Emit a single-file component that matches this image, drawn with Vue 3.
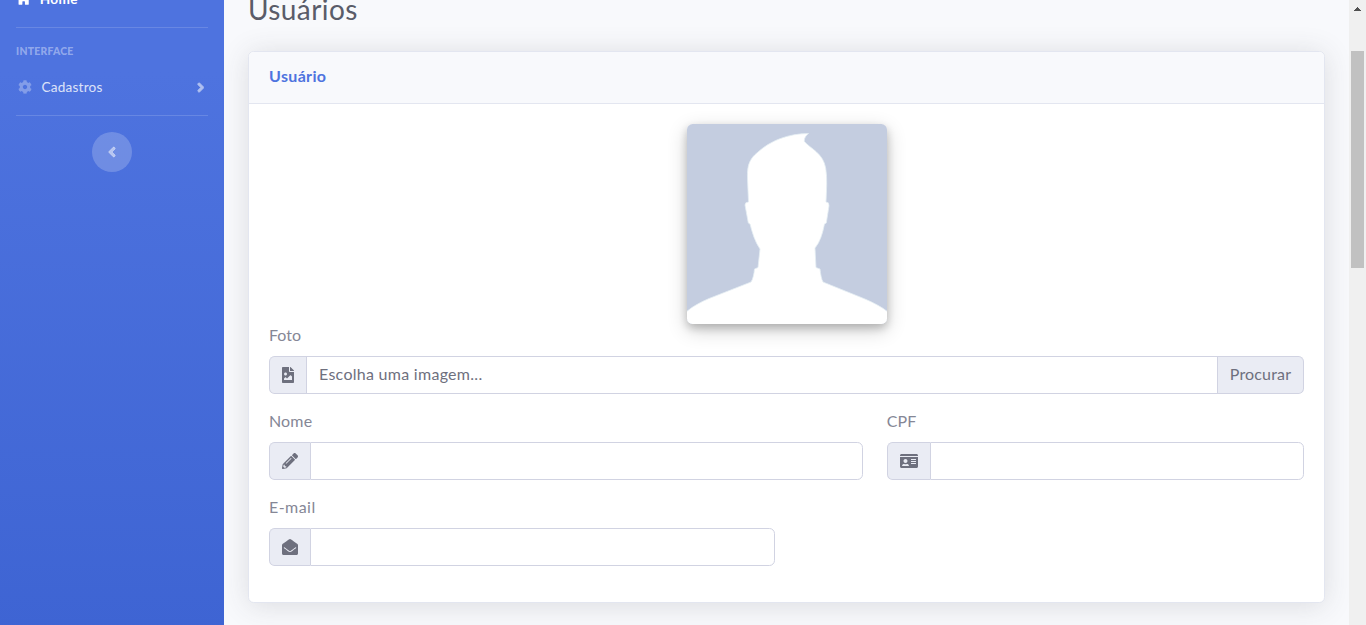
<script setup>
const icons = {
  home: { w: 576, d: 'M280.37 148.26L96 300.11V464a16 16 0 0 0 16 16l112.06-.29a16 16 0 0 0 15.92-16V368a16 16 0 0 1 16-16h64a16 16 0 0 1 16 16v95.64a16 16 0 0 0 16 16.05L464 480a16 16 0 0 0 16-16V300L295.67 148.26a12.19 12.19 0 0 0-15.3 0z' },
  cog: { w: 512, d: 'M487.4 315.7l-42.6-24.6c4.3-23.2 4.3-47 0-70.2l42.6-24.6c4.9-2.8 7.1-8.6 5.5-14-11.1-35.6-30-67.8-54.7-94.6-3.8-4.1-10-5.1-14.8-2.3L380.8 110c-17.9-15.4-38.5-27.3-60.8-35.1V25.8c0-5.6-3.9-10.5-9.4-11.7-36.7-8.2-74.3-7.8-109.2 0-5.5 1.2-9.4 6.1-9.4 11.7V75c-22.2 7.9-42.8 19.8-60.8 35.1L88.7 85.5c-4.9-2.8-11-1.9-14.8 2.3-24.7 26.7-43.6 58.9-54.7 94.6-1.7 5.4.6 11.2 5.5 14L67.3 221c-4.3 23.2-4.3 47 0 70.2l-42.6 24.6c-4.9 2.8-7.1 8.6-5.5 14 11.1 35.6 30 67.8 54.7 94.6 3.8 4.1 10 5.1 14.8 2.3l42.6-24.6c17.9 15.4 38.5 27.3 60.8 35.1v49.2c0 5.6 3.9 10.5 9.4 11.7 36.7 8.2 74.3 7.8 109.2 0 5.5-1.2 9.4-6.1 9.4-11.7v-49.2c22.2-7.9 42.8-19.8 60.8-35.1l42.6 24.6c4.9 2.8 11 1.9 14.8-2.3 24.7-26.7 43.6-58.9 54.7-94.6 1.5-5.5-.7-11.3-5.6-14.1zM256 336c-44.1 0-80-35.9-80-80s35.9-80 80-80 80 35.9 80 80-35.9 80-80 80z' },
  right: { w: 256, d: 'M224.3 273l-136 136c-9.4 9.4-24.6 9.4-33.9 0l-22.6-22.6c-9.4-9.4-9.4-24.6 0-33.9l96.4-96.4-96.4-96.4c-9.4-9.4-9.4-24.6 0-33.9L54.3 103c9.4-9.4 24.6-9.4 33.9 0l136 136c9.5 9.4 9.5 24.6.1 34z' },
  left: { w: 256, d: 'M31.7 239l136-136c9.4-9.4 24.6-9.4 33.9 0l22.6 22.6c9.4 9.4 9.4 24.6 0 33.9L127.9 256l96.4 96.4c9.4 9.4 9.4 24.6 0 33.9L201.7 409c-9.4 9.4-24.6 9.4-33.9 0l-136-136c-9.5-9.4-9.5-24.6-.1-34z' },
  image: { w: 384, d: 'M384 121.941V128H256V0h6.059a24 24 0 0 1 16.97 7.029l97.941 97.941a24.002 24.002 0 0 1 7.03 16.971zM248 160c-13.2 0-24-10.8-24-24V0H24C10.745 0 0 10.745 0 24v464c0 13.255 10.745 24 24 24h336c13.255 0 24-10.745 24-24V160H248zm-135.455 16c26.51 0 48 21.49 48 48s-21.49 48-48 48-48-21.49-48-48 21.491-48 48-48zm208 240h-256l.485-48.485L104.545 328c4.686-4.686 11.799-4.201 16.485.485L160.545 368 264.06 264.485c4.686-4.686 12.284-4.686 16.971 0L320.545 304v112z' },
  pencil: { w: 512, d: 'M497.9 142.1l-46.1 46.1c-4.7 4.7-12.3 4.7-17 0l-111-111c-4.7-4.7-4.7-12.3 0-17l46.1-46.1c18.7-18.7 49.1-18.7 67.9 0l60.1 60.1c18.8 18.7 18.8 49.1 0 67.9zM284.2 99.8L21.6 362.4.4 483.9c-2.9 16.4 11.4 30.6 27.8 27.8l121.5-21.3 262.6-262.6c4.7-4.7 4.7-12.3 0-17l-111-111c-4.8-4.7-12.4-4.7-17.1 0zM124.1 339.9c-5.5-5.5-5.5-14.3 0-19.8l154-154c5.5-5.5 14.3-5.5 19.8 0s5.5 14.3 0 19.8l-154 154c-5.5 5.5-14.3 5.5-19.8 0zM88 424h48v36.3l-64.5 11.3-31.1-31.1L51.7 376H88v48z' },
  idcard: { w: 576, d: 'M528 32H48C21.5 32 0 53.5 0 80v16h576V80c0-26.5-21.5-48-48-48zM0 432c0 26.5 21.5 48 48 48h480c26.5 0 48-21.5 48-48V128H0v304zM352 200c0-4.4 3.6-8 8-8h144c4.4 0 8 3.6 8 8v16c0 4.4-3.6 8-8 8H360c-4.4 0-8-3.6-8-8v-16zm0 64c0-4.4 3.6-8 8-8h144c4.4 0 8 3.6 8 8v16c0 4.4-3.6 8-8 8H360c-4.4 0-8-3.6-8-8v-16zm0 64c0-4.4 3.6-8 8-8h144c4.4 0 8 3.6 8 8v16c0 4.4-3.6 8-8 8H360c-4.4 0-8-3.6-8-8v-16zM176 192c35.3 0 64 28.7 64 64s-28.7 64-64 64-64-28.7-64-64 28.7-64 64-64zM67.1 396.2C75.5 370.5 99.6 352 128 352h8.2c12.3 5.1 25.7 8 39.8 8s27.6-2.9 39.8-8h8.2c28.4 0 52.5 18.5 60.9 44.2 3.2 9.9-5.2 19.8-15.6 19.8H82.7c-10.4 0-18.8-10-15.6-19.8z' },
  mail: { w: 512, d: 'M512 464c0 26.51-21.49 48-48 48H48c-26.51 0-48-21.49-48-48V200.724a48 48 0 0 1 18.387-37.776c24.913-19.529 45.501-35.365 164.2-121.511C199.412 29.17 232.797-.347 256 .003c23.198-.354 56.596 29.172 73.413 41.433 118.687 86.137 139.303 101.995 164.2 121.512A48 48 0 0 1 512 200.724V464zm-65.666-196.605c-2.563-3.728-7.7-4.595-11.339-1.907-22.845 16.873-55.462 40.705-105.582 77.079-16.825 12.266-50.21 41.781-73.413 41.43-23.211.344-56.559-29.143-73.413-41.43-50.114-36.37-82.734-60.204-105.582-77.079-3.639-2.688-8.776-1.821-11.339 1.907l-9.072 13.196a7.998 7.998 0 0 0 1.839 10.967c22.887 16.899 55.454 40.69 105.303 76.868 20.274 14.781 56.524 47.813 92.264 47.573 35.724.242 71.961-32.771 92.263-47.573 49.85-36.179 82.418-59.97 105.303-76.868a7.998 7.998 0 0 0 1.839-10.967l-9.071-13.196z' },
}
const fields = [
  { id: 'nome', label: 'Nome', icon: 'pencil', col: 'col-7' },
  { id: 'cpf', label: 'CPF', icon: 'idcard', col: 'col-5' },
  { id: 'email', label: 'E-mail', icon: 'mail', col: 'col-6' },
]
</script>

<template>
  <div class="page">
    <aside class="sidebar">
      <a class="link active">
        <svg class="home-icon" viewBox="0 0 576 512"><path :d="icons.home.d" /></svg>
        <span class="home-text">Home</span>
      </a>
      <hr />
      <div class="heading">INTERFACE</div>
      <a class="link menu">
        <svg class="cog" viewBox="0 0 512 512"><path :d="icons.cog.d" /></svg>
        <span class="menu-text">Cadastros</span>
        <svg class="chevron" viewBox="0 0 256 512"><path :d="icons.right.d" /></svg>
      </a>
      <hr />
      <button class="toggle">
        <svg viewBox="0 0 256 512"><path :d="icons.left.d" /></svg>
      </button>
    </aside>

    <main class="content">
      <h1>Usuários</h1>
      <section class="card">
        <header><h6>Usuário</h6></header>
        <div class="body">
          <svg class="avatar" viewBox="0 0 200 200">
            <rect width="200" height="200" fill="#c4cde0" />
            <path
              fill="#fff"
              stroke="#e4eef3"
              stroke-width=".8"
              d="M-1 188C6 182 14 178 22 174.500L64 158C66 155 67 150 67.500 145L71 143.500L73 125C68 118 65 108 63 100L61.300 99L58 81Q58 78 61.500 78L60.500 55C60 42 62 35 71 28C83 17 101 9.500 121.500 9.500C119 11.500 117 14 117.300 17.500C124 25 136 29 138.700 44C140.500 55 139.500 66 139 78Q142.500 78 142 82L139.300 99L137.500 100C135.500 110 133 118 128 124L129 143.500L133 145C133.500 150 134.500 155 136 158L178 175C187 179 195 183 201 188V201H-1Z"
            />
          </svg>
          <label>Foto</label>
          <div class="group">
            <span class="addon file"><svg viewBox="0 0 384 512"><path :d="icons.image.d" /></svg></span>
            <div class="control placeholder"><span>Escolha uma imagem...</span></div>
            <button class="browse">Procurar</button>
          </div>
          <div class="row">
            <div v-for="f in fields" :key="f.id" class="field" :class="[f.col, f.id]">
              <label :for="f.id">{{ f.label }}</label>
              <div class="group">
                <span class="addon">
                  <svg :class="f.icon" :viewBox="`0 0 ${icons[f.icon].w} 512`"><path :d="icons[f.icon].d" /></svg>
                </span>
                <input :id="f.id" class="control last" type="text" />
              </div>
            </div>
          </div>
        </div>
      </section>
    </main>

    <div class="scrollbar">
      <svg class="arrow" viewBox="0 0 7 4"><path d="M3 0h1v1h1v1h1v1h1v1H0V3h1V2h1V1h1z" /></svg>
      <div class="track"><div class="thumb"></div></div>
      <svg class="arrow" viewBox="0 0 7 4"><path d="M0 0h7v1H6v1H5v1H4v1H3V3H2V2H1V1H0z" /></svg>
    </div>
  </div>
</template>

<style>
html, body { overflow: hidden; }
</style>

<style scoped>
* { box-sizing: border-box; }
.page {
  display: grid;
  grid-template-columns: 224px 1fr 17px;
  height: 625px;
  overflow: hidden;
  background: #f8f9fc;
  font: 400 16px/24px Lato, "Noto Sans", sans-serif;
  color: #858796;
}
svg { display: block; flex: none; fill: currentColor; }

.sidebar {
  height: 1702px;
  margin-top: -98px;
  padding: 71px 16px 0;
  background: linear-gradient(180deg, #4e73df 10%, #224abe 100%);
  color: #fff;
}
.sidebar hr { height: 1px; margin: 0; border: 0; background: rgba(255, 255, 255, .15); }
.link { display: flex; align-items: center; font-size: 13.6px; line-height: 20px; }
.active { height: 52px; font-weight: 700; margin-bottom: 2px; }
.home-icon { width: 15.3px; height: 13.6px; margin: 0 8.5px 0 0; }
.home-text { letter-spacing: .3px; }
.heading {
  height: 16px;
  margin-top: 15px;
  font-size: 10.4px;
  line-height: 17px;
  font-weight: 900;
  letter-spacing: .25px;
  color: rgba(255, 255, 255, .4);
}
.menu { height: 20px; margin: 18px 0; }
.cog { width: 14px; height: 14px; margin: 0 9.5px 0 2px; opacity: .3; }
.menu-text { opacity: .8; letter-spacing: .2px; }
.chevron { height: 15px; width: 7.5px; margin: 0 4px 0 auto; opacity: .55; stroke: currentColor; stroke-width: 28; }
.toggle {
  display: flex;
  align-items: center;
  justify-content: center;
  width: 40px;
  height: 40px;
  margin: 16px auto 0;
  padding: 0 1px 0 0;
  border: 0;
  border-radius: 50%;
  background: rgba(255, 255, 255, .2);
  color: rgba(255, 255, 255, .5);
}
.toggle svg { height: 16px; width: 8px; stroke: currentColor; stroke-width: 24; }

.content { padding: 0 24px; min-width: 0; }
h1 {
  margin: -8px 0 25px;
  font-size: 28px;
  line-height: 34px;
  font-weight: 400;
  letter-spacing: .4px;
  color: #5a5c69;
}
.card {
  border: 1px solid #e3e6f0;
  border-radius: 5.6px;
  background: #fff;
  box-shadow: 0 2.4px 28px 0 rgba(58, 59, 69, .15);
}
header {
  height: 52px;
  padding: 12px 20px;
  border-bottom: 1px solid #e3e6f0;
  border-radius: 5px 5px 0 0;
  background: #f8f9fc;
}
h6 { margin: 0; font-size: 16px; line-height: 23px; font-weight: 700; letter-spacing: .35px; color: #4e73df; }
.body { padding: 20px; }
.avatar {
  width: 200px;
  height: 200px;
  margin: 0 auto;
  border-radius: 5.6px;
  box-shadow: 0 4px 8px rgba(0, 0, 0, .2), 0 6px 20px rgba(0, 0, 0, .19);
}
label { display: block; height: 24px; margin-bottom: 8px; line-height: 22px; }
.nome label, .cpf label { letter-spacing: .15px; }
.email label { letter-spacing: .45px; }
.group { display: flex; height: 38px; margin-bottom: 16px; }
.addon {
  display: flex;
  align-items: center;
  padding: 0 12px;
  border: 1px solid #d1d3e2;
  border-right: 0;
  border-radius: 5.6px 0 0 5.6px;
  background: #eaecf4;
  color: #6e707e;
}
.addon svg { height: 16px; width: 16px; }
.addon .idcard { width: 18px; }
.addon.file svg { width: 12px; }
.control {
  flex: 1;
  min-width: 0;
  border: 1px solid #d1d3e2;
  background: #fff;
  padding: 6px 12px;
  font: inherit;
  color: #6e707e;
}
.placeholder { line-height: 22px; letter-spacing: .28px; }
.last { border-radius: 0 5.6px 5.6px 0; }
.browse {
  width: 86px;
  padding: 0 0 2px;
  border: 1px solid #d1d3e2;
  border-left: 0;
  border-radius: 0 5.6px 5.6px 0;
  background: #eaecf4;
  font: inherit;
  letter-spacing: .15px;
  color: #6e707e;
}
.row { display: flex; flex-wrap: wrap; margin: 0 -12px; }
.field { padding: 0 12px; }
.col-7 { width: 58.3333%; }
.col-5 { width: 41.6667%; }
.col-6 { width: 50%; }

.scrollbar {
  display: flex;
  flex-direction: column;
  align-items: center;
  justify-content: space-between;
  padding: 7px 2px;
  background: #f0f0f0;
  color: #505050;
}
.arrow { width: 7px; height: 4px; }
.track { flex: 1; width: 13px; padding-top: 40px; }
.thumb { height: 217px; background: #c1c1c1; }
</style>
